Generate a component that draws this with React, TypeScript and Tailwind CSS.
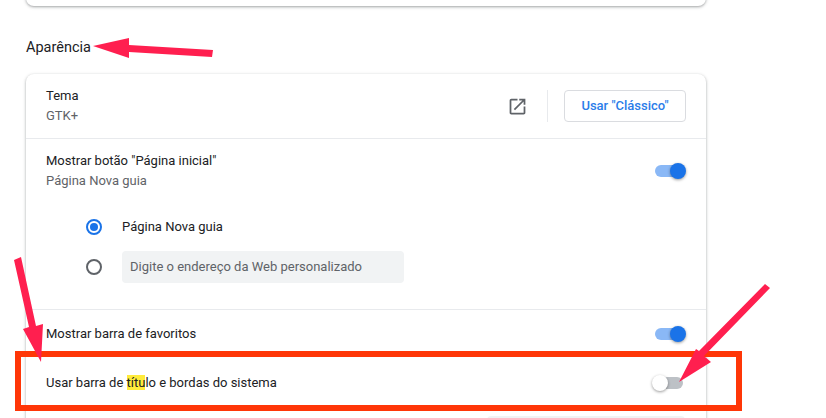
import React from "react";

function Toggle({ on }: { on: boolean }) {
  return (
    <div className="relative h-4 w-[34px] shrink-0">
      <div className={`absolute left-[3px] top-[2px] h-3 w-7 rounded-full ${on ? "bg-[#8ab8f6]" : "bg-[#bdc1c6]"}`} />
      <div
        className={`absolute top-0 h-4 w-4 rounded-full shadow-[0_1px_3px_rgba(0,0,0,0.4)] ${
          on ? "left-[18px] bg-[#1a73e8]" : "left-0 bg-white"
        }`}
      />
    </div>
  );
}

function Annotations() {
  return (
    <svg className="pointer-events-none absolute left-0 top-0" width="826" height="418" viewBox="0 0 826 418">
      <g fill="#ff1f4f">
        <polygon points="93,46 129,38 129,45 213,50 212,57 129,52 129,58" />
        <polygon points="14,260 21,257 36,326 43,324 41,362 23,329 29,327" />
        <polygon points="765,284 770,288 704,356 711,362 679,382 696,349 699,351" />
      </g>
    </svg>
  );
}

export default function App() {
  return (
    <div className="relative h-[418px] w-[826px] overflow-hidden bg-white font-['Roboto',sans-serif] text-[13px] text-[#202124]">
      <div className="w-[680px] ml-[26px]">
        <div className="-mt-[54px] h-[60px] rounded-lg bg-white shadow-[0_1px_2px_rgba(60,64,67,0.3),0_1px_3px_1px_rgba(60,64,67,0.15)]" />

        <h2 className="mt-[33px] h-[35px] text-[14.5px] font-normal leading-[18px]">Aparência</h2>

        <div className="rounded-lg bg-white pb-[10px] shadow-[0_1px_2px_rgba(60,64,67,0.3),0_1px_3px_1px_rgba(60,64,67,0.15)]">
          <div className="flex h-[65px] items-center border-b border-[#e8eaed] pl-5 pr-5">
            <div className="flex-1 leading-[20px]">
              <div>Tema</div>
              <div className="text-[#5f6368]">GTK+</div>
            </div>
            <svg width="21" height="21" viewBox="0 0 24 24" fill="#5f6368" className="mr-[19px]">
              <path d="M19 19H5V5h7V3H5c-1.11 0-2 .9-2 2v14c0 1.1.89 2 2 2h14c1.1 0 2-.9 2-2v-7h-2v7zM14 3v2h3.59l-9.83 9.83 1.41 1.41L19 6.41V10h2V3h-7z" />
            </svg>
            <div className="mr-4 h-8 w-px bg-[#e8eaed]" />
            <button className="h-8 w-[122px] rounded border border-[#dadce0] bg-white text-[13px] font-medium text-[#2b7de9]">
              Usar "Clássico"
            </button>
          </div>

          <div className="h-[171px] border-b border-[#e8eaed]">
            <div className="flex h-[64px] items-center pl-5 pr-5">
              <div className="flex-1 leading-[20px]">
                <div className="-mt-px">Mostrar botão "Página inicial"</div>
                <div className="text-[#5f6368]">Página Nova guia</div>
              </div>
              <Toggle on />
            </div>
            <div className="flex h-[48px] items-center pl-[60px]">
              <div className="flex h-4 w-4 items-center justify-center rounded-full border-2 border-[#1a73e8]">
                <div className="h-2 w-2 rounded-full bg-[#1a73e8]" />
              </div>
              <span className="ml-[20px]">Página Nova guia</span>
            </div>
            <div className="-mt-[8px] flex h-[48px] items-center pl-[60px]">
              <div className="h-4 w-4 rounded-full border-2 border-[#5f6368]" />
              <div className="ml-[20px] flex h-8 w-[282px] items-center rounded bg-[#f1f3f4] pl-2 text-[#5f6368]">
                Digite o endereço da Web personalizado
              </div>
            </div>
          </div>

          <div className="flex h-[48px] items-center pl-5 pr-5">
            <div className="flex-1">Mostrar barra de favoritos</div>
            <Toggle on />
          </div>
          <div className="flex h-[50px] items-center pl-5 pr-5">
            <div className="flex-1">
              Usar barra de <mark className="bg-[#ffeb3b] text-inherit">títu</mark>lo e bordas do sistema
            </div>
            <Toggle on={false} />
          </div>
          <div className="ml-[461px] mt-[8px] h-8 w-[198px] rounded bg-[#f1f3f4]" />
        </div>
      </div>

      <div className="absolute left-[15px] top-[351px] h-[60px] w-[727px] border-[6px] border-[#ff3607]" />
      <Annotations />
    </div>
  );
}
